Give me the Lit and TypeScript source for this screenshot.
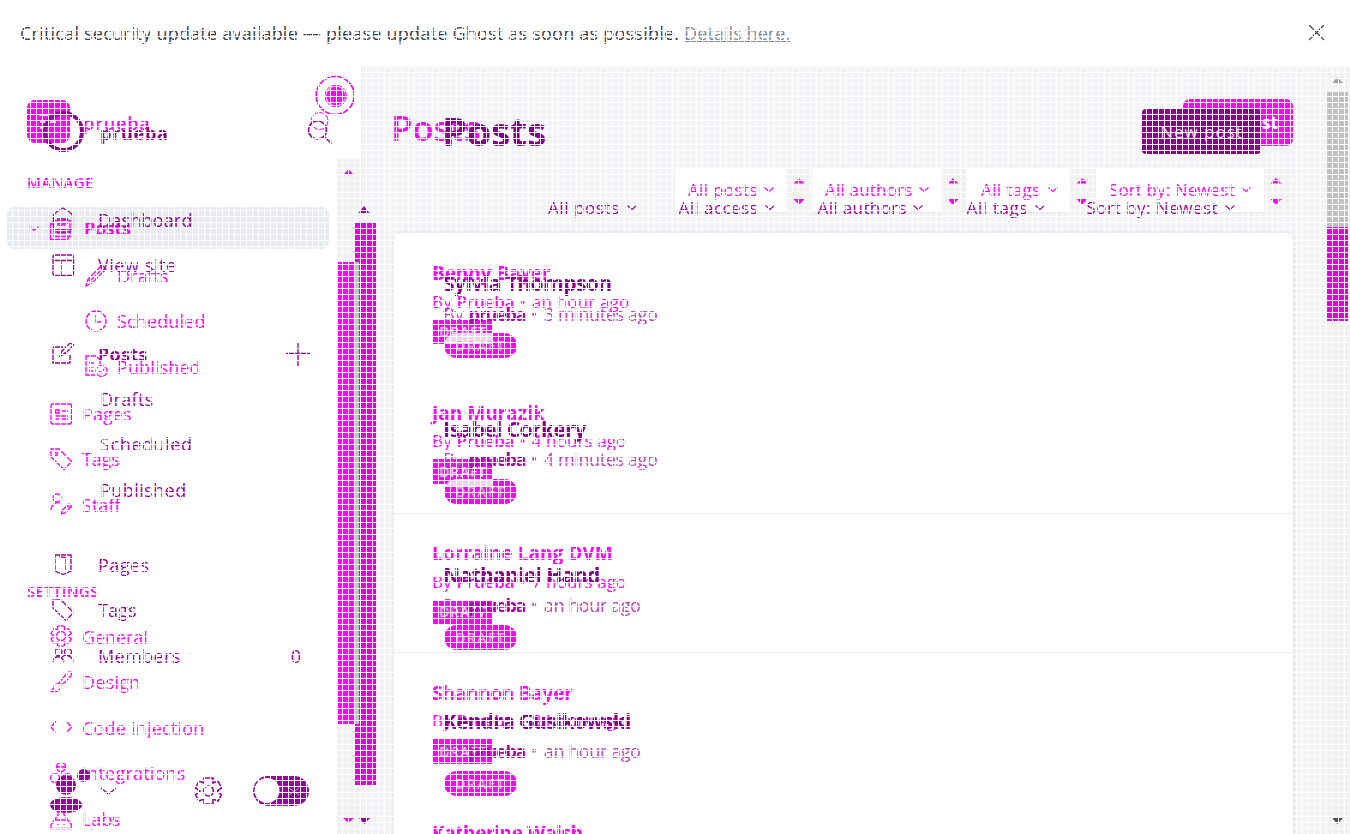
import { LitElement, html, svg, css } from "lit";
import { customElement } from "lit/decorators.js";

const fit = (s: string, w: number, cls = "") =>
  html`<span class="fit ${cls}" data-w=${w}>${s}</span>`;

const glyphs: Record<string, any> = {
  posts: svg`<path d="M5 3.500H21V19.500H5ZM5 7H1.500V22.500H19V20M8 8H18M8 12H18M8 16H18"/>`,
  pencil: svg`<path d="M1 22L3 15L17 1L21 5L7 19ZM15 3L19 7M3 15L7 19M6 16L16 6"/>`,
  clock: svg`<circle cx="11" cy="11" r="10"/><path d="M11 5V12H16"/>`,
  published: svg`<path d="M10 20H1V1H11L15 5V9M4 8H9M4 12H8M4 16H8"/><circle cx="16.500" cy="16" r="5.500"/><path d="M14 16L16 18L19 14"/>`,
  pages: svg`<rect x="1" y="1" width="20.500" height="20" rx="2"/><path d="M5.500 7H9V10H5.500ZM12 8H18M5.500 13H18M5.500 16H9M12 16H18"/>`,
  tag: svg`<path d="M1 1H9L21.500 13.500L14 21.500L1 9Z"/><circle cx="6" cy="6" r="1.500"/>`,
  tagPlain: svg`<path d="M1 1H9L21.500 13.500L14 21.500L1 9Z"/>`,
  staff: svg`<circle cx="7" cy="5" r="4"/><path d="M1 17C2 9 9 8 12 12M11 21L12.500 17L19 11L21.500 13.500L15 20ZM17 13L20 15"/>`,
  gear: svg`<circle cx="11" cy="11" r="4.500"/><path d="M7.500 1.500Q11 0 14.500 1.500V5L18 3.500L21.500 8.500L18 11L21.500 14L18 18.500L14.500 17V20.500Q11 22 7.500 20.500V17L4 18.500L1 14L4 11L1 8.500L4 3.500L7.500 5Z"/>`,
  brush: svg`<path d="M9 12L17 2Q20 0 21.500 2Q22 4 20 6L12 14ZM9 12Q11 12 12 14M9 13Q4 12 4 17L1 20Q9 22 11 16"/>`,
  code: svg`<path d="M6 5L1 11L6 17M16 5L21.500 11L16 17"/>`,
  integrations: svg`<circle cx="11" cy="5" r="4.500"/><circle cx="5" cy="16" r="4.500"/><circle cx="17" cy="16" r="4.500"/><path d="M6.500 5H15.500M11 9V13"/>`,
  labs: svg`<path d="M7 1H15M8 1V8L1 18V21.500H21.500V18L14 8V1M5 13H17M8 17V18M14 17V18"/>`,
  home: svg`<path d="M1.500 22V8Q5 4 11 1Q17 4 20.500 8V22ZM5 12H16M5 16H16M3 25H19"/>`,
  layout: svg`<rect x="1" y="1" width="20.500" height="20.500" rx="2"/><path d="M1 6.500H21.500M9 6.500V21.500"/>`,
  edit: svg`<path d="M11 5H2Q1 5 1 6V21H18V12M8 14L10 9L18 1L21.500 3L13 12ZM9 14L14 10"/>`,
  book: svg`<path d="M3 2H19V18L11 21.500L3 18ZM8 2V4L14 4.500V18"/>`,
  members: svg`<circle cx="6.500" cy="8" r="3.500"/><circle cx="16" cy="8" r="3.500"/><path d="M1 18C2 11 10 11 12 18M10 13C13 10 20 11 21.500 18"/>`,
};

const icon = (n: string, h = 23) =>
  html`<svg class="icon" width="23" height=${h} viewBox="0 0 23 ${h}">${glyphs[n]}</svg>`;
const chevron = (w = 10, m = 0) =>
  html`<svg class="chev" style="margin-left:${m}px" width=${w} height="7" viewBox="0 0 10 7"><path d="M0.500 1.500L5 5.500L9.500 1.500"/></svg>`;
const arrows = html`<svg class="arrows" width="25" height="44" viewBox="0 0 25 44">
  <path d="M12 10L17.500 15.500H6.500ZM12 37L6.500 31H17.500Z"/></svg>`;

const oldPosts: [string, number, string, number][] = [
  ["Benny Bayer", 118, "an hour ago", 97],
  ["Jan Murazik", 112, "4 hours ago", 94],
  ["Lorraine Lang DVM", 180, "7 hours ago", 94],
  ["Shannon Bayer", 140, "8 hours ago", 94],
  ["Katherine Walsh", 150, "9 hours ago", 94],
];
const newPosts: [string, number, string, number, number][] = [
  ["Sylvia Thompson", 168, "3 minutes ago", 113, 11],
  ["Isabel Corkery", 142, "4 minutes ago", 113, 7],
  ["Nathaniel Hand", 156, "an hour ago", 96, 0],
  ["Kendra Gusikowski", 187, "an hour ago", 96, 0],
];

@customElement("app-root")
export class AppRoot extends LitElement {
  static styles = css`
    :host { display: block; position: relative; width: 1350px; height: 834px; overflow: hidden; background: #fff;
      font-family: "Open Sans", "Noto Sans", sans-serif; font-size: 18px; color: #394047; }
    * { box-sizing: border-box; }
    svg { display: block; flex: none; fill: none; stroke: currentColor; overflow: visible; }
    .icon, .plus { stroke-width: 1.35; }
    .chev { stroke-width: 1.1; }
    .fit { white-space: pre; flex: none; }
    .veil { position: absolute; inset: 0; pointer-events: none;
      background: repeating-linear-gradient(90deg, #fff 0 1px, transparent 1px 6px),
        repeating-linear-gradient(#fff 0 1px, transparent 1px 6px); }
    .banner { display: flex; align-items: center; height: 67px; padding: 0 25px 2px 20px; }
    .link { text-decoration: underline; color: #7c8b9a; }
    .grow { flex: 1; }
    .stack { display: grid; height: 767px; grid-template: 767px / 1350px; overflow: hidden; }
    .layer { grid-area: 1 / 1; display: flex; overflow: hidden; }
    .side { width: 361px; flex: none; display: flex; flex-direction: column; }
    .side > * { flex: none; }
    .main { flex: 1; min-width: 0; }
    .base .main { background: #f2f3f7; border-left: 1px solid #e7e7ee; }
    .rail { width: 24px; background: #f1f1f1; }
    .track { width: 24px; height: 675px; margin: 92px 0 0 337px; background: #f1f1f1; }
    .old { color: #ff00ff; }
    .new { color: #9a009f; }
    .top { display: flex; height: 92px; }
    .logo { width: 43px; height: 43px; margin: 33px 13px 0 27px; border-radius: 8px; background: #ff00ff; }
    .ring { width: 41px; height: 41px; margin: 44px 16px 0 43px; border: 4px solid #94009a; border-radius: 50%; }
    .name { font-weight: 600; line-height: 24px; }
    .old .name { margin-top: 44px; }
    .new .name { margin-top: 54px; color: #85008a; font-weight: 700; }
    .label { display: flex; align-items: center; height: 46px; padding-left: 27px; font-size: 15px; font-weight: 600; }
    .label.second { margin-top: 40px; margin-bottom: .5px; }
    .active { display: flex; align-items: center; width: 322px; height: 42px; margin: 2px 0 4px 7px; padding-left: 21px;
      border-radius: 7px; background: #e7ebf0; font-weight: 700; }
    .active .icon { margin: 0 12px 0 9px; }
    .row { display: flex; align-items: center; height: 45.45px; padding-left: 50px; }
    .row .icon { margin-right: 9px; }
    .row.sub { padding-left: 85px; }
    .old .gap { height: 2px; }
    .new .row { padding-left: 52px; }
    .new .row .icon { margin-right: 23px; }
    .new .row.sub { padding-left: 100px; }
    .new .row .end { margin-left: auto; }
    .bold { font-weight: 700; }
    .plus { margin-left: 138px; }
    .heading { display: flex; height: 101px; padding-left: 30px; }
    .title { font-size: 36px; line-height: 44px; margin-top: 39px; }
    .old .title { font-weight: 600; font-size: 35px; }
    .new .title { font-size: 40px; font-weight: 700; margin: 42px 0 0 51px; color: #85008a; }
    .button { display: flex; align-items: center; justify-content: center; color: #fff; font-size: 17px; font-weight: 700; }
    .old .button { width: 110px; height: 47px; margin: 32px 33px 0 auto; border-radius: 7px; background: #ff00ff; }
    .new .button { width: 119px; height: 45px; margin: 42px 65px 0 auto; border-radius: 4px; background: #8b008b; color: #ecc8ec; font-weight: 400; }
    .filters { display: flex; margin-left: 314px; height: 44px; font-size: 17px; }
    .box { display: flex; align-items: center; padding-bottom: 2px; background: #fff; box-shadow: 0 1px 2px #0001; }
    .box:first-child { border-radius: 5px 0 0 5px; }
    .arrows { background: #f1f1f1; }
    .arrows path { fill: currentColor; stroke: none; }
    .pick { display: flex; align-items: center; height: 30px; }
    .new .filters { margin: 24px 0 0 187px; height: 30px; }
    .card { width: 899px; height: 640px; margin: 21px 0 0 33px; background: #fff; border-radius: 7px; box-shadow: 0 0 4px #28304820; }
    .post { height: 139.8px; padding: 27px 0 0 38px; }
    .post:nth-child(n + 3) { border-top: 1px solid #e3ebf3; padding-top: 26.500px; }
    .head { font-size: 19px; font-weight: 700; line-height: 26px; }
    .meta { font-size: 17px; line-height: 26px; margin-top: 2.500px; }
    .old .meta .bold { font-weight: 600; }
    .badge { display: flex; align-items: center; justify-content: center; font-size: 14px; font-weight: 600; width: 60px; height: 24.500px; margin: 5px 0 0 1px;
      background: #ff00ff; color: #ffc4ff; }
    .posts { padding: 22px 0 0 82px; }
    .new .post { height: 145.9px; padding: 26px 0 0; border: 0; }
    .new .head { font-size: 21px; font-weight: 700; color: #85008a; }
    .new .meta { font-size: 18px; margin-top: 4.500px; color: #bd3fbd; }
    .new .meta .bold { color: #ae00ae; }
    .new .badge { width: 73px; height: 25px; margin-top: 6.500px; border-radius: 13px; color: #e6a0c8;
      background: linear-gradient(#ecd5ec, #ecd5ec) 0 0 no-repeat #ff00ff; }
    .solid { fill: currentColor; stroke: none; }
    .foot { height: 84px; }
    .side > .foot { margin-top: auto; }
  `;

  firstUpdated() {
    this.renderRoot.querySelectorAll<HTMLElement>(".fit").forEach((el) => {
      const width = el.getBoundingClientRect().width;
      const target = Number(el.dataset.w) + 0.6;
      el.style.letterSpacing = `${(target - width) / (el.textContent || " ").length}px`;
    });
  }

  row(i: string, label: string, w: number, cls = "", extra: unknown = "") {
    return html`<div class="row ${cls}">${i ? icon(i) : ""}${fit(label, w)}${extra}</div>`;
  }

  pick(label: string, w: number, gap: number, cell: number) {
    return html`<div class="pick" style="width:${cell}px">${fit(label, w)}${chevron(10, gap)}</div>`;
  }

  box(label: string, w: number, cell: number, pad: number, gap: number, last = 25) {
    return html`<div class="box" style="width:${cell}px;padding-left:${pad}px">${fit(label, w)}${chevron(10, gap)}</div>
      <div style="width:${last}px">${arrows}</div>`;
  }

  render() {
    return html`
      <div class="banner">
        ${fit("Critical security update available — please update Ghost as soon as possible. ", 663.5)}
        ${fit("Details here.", 105.5, "link")}
        <span class="grow"></span>
        <svg width="17" height="17" viewBox="0 0 17 17"><path stroke-width="1.1" d="M1 1L16 16M16 1L1 16"/></svg>
      </div>
      <div class="stack">
        <div class="layer base">
          <div class="side"><div class="track"></div></div>
          <div class="main"></div>
          <div class="rail"><svg width="24" height="767" viewBox="1326 67 24 767">
            <path style="fill:#a3a3a3;stroke:none" d="M1337.500 77L1343 83H1332Z"/>
            <path style="fill:#505050;stroke:none" d="M1332 818H1343L1337.500 824Z"/>
            <rect x="1327" y="92" width="21" height="135" style="fill:#c1c1c1;stroke:none"/>
            <rect x="1327" y="227" width="21" height="94" style="fill:#e000e0;stroke:none"/>
          </svg></div>
        </div>

        <div class="layer old">
          <div class="side">
            <div class="top">
              <div class="logo"><svg width="43" height="43" viewBox="0 0 43 43"><path style="stroke:#ffc8ff" stroke-width="2" d="M12 15H22M26 15H31M13 22H29M13 28H19"/></svg></div>
              ${fit("prueba", 67, "name")}
            </div>
            <div class="label">${fit("MANAGE", 66)}</div>
            <div class="active">${chevron(12)}${icon("posts")}${fit("Posts", 46)}</div>
            ${this.row("pencil", "Drafts", 51, "sub")}
            ${this.row("clock", "Scheduled", 88, "sub")}
            ${this.row("published", "Published", 83, "sub")}
            <div class="gap"></div>
            ${this.row("pages", "Pages", 49)}
            ${this.row("tag", "Tags", 37)}
            ${this.row("staff", "Staff", 38)}
            <div class="label second">${fit("SETTINGS", 71)}</div>
            ${this.row("gear", "General", 65)}
            ${this.row("brush", "Design", 58)}
            ${this.row("code", "Code injection", 122)}
            ${this.row("integrations", "Integrations", 103)}
            ${this.row("labs", "Labs", 38)}
          </div>
          <div class="main">
            <div class="heading">${fit("Posts", 89, "title")}<div class="button">${fit("New post", 79)}</div></div>
            <div class="filters">
              ${this.box("All posts", 69, 112, 13, 6)}
              ${this.box("All authors", 87, 129, 13, 6)}
              ${this.box("All tags", 59, 104, 15, 7, 26)}
              ${this.box("Sort by: Newest", 125, 168, 13, 6)}
            </div>
            <div class="card">
              ${oldPosts.map(([n, w, ago, aw]) => html`<div class="post">
                <div class="head">${fit(n, w)}</div>
                <div class="meta">${fit("By ", 24)}${fit("Prueba", 57, "bold")}${fit(" • ", 17)}${fit(ago, aw)}</div>
                <div class="badge">${fit("DRAFT", 47)}</div>
              </div>`)}
            </div>
          </div>
          <div class="rail" style="background:none"></div>
        </div>

        <div class="layer new">
          <div class="side">
            <div class="top"><div class="ring"></div>${fit("prueba", 68, "name")}</div>
            <div style="height:38px"></div>
            <div class="row">${icon("home", 26)}${fit("Dashboard", 94)}</div>
            ${this.row("layout", "View site", 78)}
            <div style="height:43px"></div>
            <div class="row bold">${icon("edit")}${fit("Posts", 49)}
              <svg class="plus" width="24" height="24" viewBox="0 0 24 24"><path d="M12 0V24M0 11.500H24"/></svg></div>
            ${this.row("", "Drafts", 53, "sub")}
            ${this.row("", "Scheduled", 92, "sub")}
            ${this.row("", "Published", 86, "sub")}
            <div style="height:29.500px"></div>
            ${this.row("book", "Pages", 51)}
            ${this.row("tagPlain", "Tags", 38)}
            ${this.row("members", "Members", 82, "", html`<span class="end" style="margin-right:60px">0</span>`)}
            <svg class="foot" width="361" height="84" viewBox="0 750 361 84">
              <g class="solid">
                <circle cx="66" cy="785" r="10"/><ellipse cx="66" cy="805" rx="16" ry="8"/><circle cx="83.500" cy="775.500" r="6.500"/>
                <rect x="253" y="776" width="56" height="30" rx="15"/>
              </g>
              <circle cx="267" cy="790.500" r="12.500" fill="#fff" stroke="none"/>
              <path style="stroke:#d58ad5" d="M289 788L299 795M299 788L289 795"/>
              <path stroke-width="1.400" d="M101 788L108.500 794L116 788"/>
              <g stroke-width="1.600"><circle cx="208.500" cy="791" r="5"/>
              <path d="M204 778H213V783L218 781L221.500 788L217 791L221.500 795L218 801L213 799V804H204V799L199 801L195.500 795L200 791L195.500 788L199 781L204 783Z"/></g>
            </svg>
          </div>
          <div class="main">
            <div class="heading">${fit("Posts", 103, "title")}<div class="button">${fit("New post", 82)}</div></div>
            <div class="filters">
              ${this.pick("All posts", 71, 7, 130.500)}
              ${this.pick("All access", 79, 7, 139)}
              ${this.pick("All authors", 89, 6, 149)}
              ${this.pick("All tags", 61, 7, 120)}
              ${this.pick("Sort by: Newest", 131, 7, 160)}
            </div>
            <div class="posts">
              ${newPosts.map(([n, w, ago, aw, cut]) => html`<div class="post">
                <div class="head">${fit(n, w)}</div>
                <div class="meta">${fit("By ", 25)}${fit("prueba", 56, "bold")}${fit(" • ", 18)}${fit(ago, aw)}</div>
                <div class="badge" style="background-size:49px ${cut}px">${fit("DRAFT", 50)}</div>
              </div>`)}
            </div>
          </div>
          <div class="rail" style="background:none"></div>
        </div>

        <div class="layer">
          <svg width="400" height="767" viewBox="0 67 400 767" style="stroke:none">
            <rect x="355" y="223" width="21" height="562" fill="#e000e0"/>
            <rect x="338" y="262" width="16" height="462" fill="#ff00ff"/>
            <rect x="354" y="262" width="5" height="462" fill="#c1c1c1"/>
            <path fill="#ff00ff" d="M348.500 169L353 174H344ZM343 818H354L348.500 823Z"/>
            <path fill="#9a009f" d="M364 206L369.500 213H358.500ZM359 818H370L364.500 824Z"/>
            <g fill="none" stroke="#ff00ff">
              <circle cx="335.200" cy="95.500" r="19" stroke-width="1.700"/><circle cx="335.700" cy="96" r="10.800"/>
              <circle cx="335.700" cy="96" r="9" fill="#ff00ff"/><circle cx="319.500" cy="121" r="8.500"/>
            </g>
            <g fill="none" stroke="#9a009f" stroke-width="1.700"><circle cx="317.500" cy="130" r="9"/><path d="M323.500 136L331.500 143.500"/></g>
          </svg>
        </div>
      </div>
      <div class="veil"></div>
    `;
  }
}
